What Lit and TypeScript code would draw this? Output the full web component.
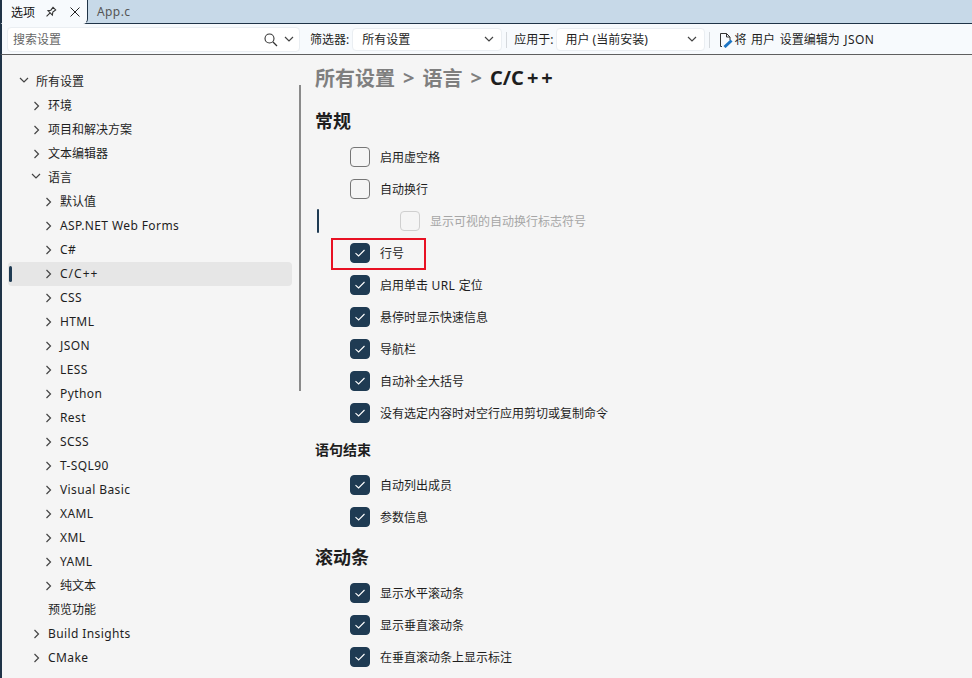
import { LitElement, html, css, svg } from 'lit';
import { customElement } from 'lit/decorators.js';

interface TreeItem {
  label: string;
  level: number;
  open?: boolean;
  leaf?: boolean;
  selected?: boolean;
}

const TREE: TreeItem[] = [
  { label: '所有设置', level: 0, open: true },
  { label: '环境', level: 1 },
  { label: '项目和解决方案', level: 1 },
  { label: '文本编辑器', level: 1 },
  { label: '语言', level: 1, open: true },
  { label: '默认值', level: 2 },
  { label: 'ASP.NET Web Forms', level: 2 },
  { label: 'C#', level: 2 },
  { label: 'C/C++', level: 2, selected: true },
  { label: 'CSS', level: 2 },
  { label: 'HTML', level: 2 },
  { label: 'JSON', level: 2 },
  { label: 'LESS', level: 2 },
  { label: 'Python', level: 2 },
  { label: 'Rest', level: 2 },
  { label: 'SCSS', level: 2 },
  { label: 'T-SQL90', level: 2 },
  { label: 'Visual Basic', level: 2 },
  { label: 'XAML', level: 2 },
  { label: 'XML', level: 2 },
  { label: 'YAML', level: 2 },
  { label: '纯文本', level: 2 },
  { label: '预览功能', level: 1, leaf: true },
  { label: 'Build Insights', level: 1 },
  { label: 'CMake', level: 1 },
];

const chevronDown = svg`<path d="M1 1 L5 5 L9 1" fill="none" stroke="currentColor" stroke-width="1.2"/>`;
const chevronRight = svg`<path d="M3.5 1 L7.5 5 L3.5 9" fill="none" stroke="currentColor" stroke-width="1.2"/>`;

// the reference font runs wider than Noto Sans on latin text, so space those runs out a bit
const spaced = (text: string) =>
  text.split(/([\x20-\x7e]*[A-Za-z#][\x20-\x7e]*)/).map((part, i) => (i % 2 ? html`<span class="latin">${part}</span>` : part));

@customElement('app-root')
export class AppRoot extends LitElement {
  static styles = css`
    :host {
      display: block;
      width: 972px;
      height: 678px;
      overflow: hidden;
      font-family: 'Noto Sans', 'Noto Sans CJK SC', sans-serif;
      font-size: 12px;
      color: #1e1e1e;
      background: #f5f5f5;
    }

    .latin {
      letter-spacing: 0.4px;
    }

    .tabstrip {
      display: flex;
      height: 23px;
      background: #c7d9e8;
      border-bottom: 1px solid #1f3347;
    }

    .tab {
      display: flex;
      align-items: center;
      box-sizing: border-box;
      width: 88px;
      height: 24px;
      padding-left: 9px;
      background: #f7fafd;
      border-left: 2px solid #1f3347;
      border-right: 1px solid #1f3347;
      border-bottom-right-radius: 5px;
      position: relative;
      z-index: 1;
      border-bottom: 1px solid #f7fafd;
    }

    .tab-title {
      width: 35px;
      color: #111;
      font-size: 12px;
    }

    .tab-pin {
      width: 11px;
      height: 11px;
      margin-right: 13px;
    }

    .tab-close {
      width: 10px;
      height: 10px;
    }

    .tab-other {
      padding: 3px 0 0 9px;
      color: #555;
      font-size: 12px;
    }

    .toolbar {
      display: flex;
      align-items: center;
      box-sizing: border-box;
      height: 31px;
      padding: 1px 0 0 5px;
      background: #f7fafd;
      border-left: 2px solid #1f3347;
      border-bottom: 1px solid #5f5f5f;
    }

    .box {
      display: flex;
      align-items: center;
      box-sizing: border-box;
      background: #fff;
      border: 1px solid #eaeef2;
      border-radius: 4px;
    }

    .search {
      width: 293px;
      height: 25px;
      padding: 0 5px 0 5px;
      color: #666;
      font-size: 12px;
    }

    .search span,
    .select span {
      flex: 1;
      margin-top: -2px;
    }

    .search .glass {
      width: 14px;
      height: 14px;
      margin-right: 6px;
      margin-left: 2px;
      color: #333;
    }

    .chev {
      width: 10px;
      height: 10px;
      flex: none;
      color: #444;
    }

    .search .chev {
      height: 7px;
    }

    .field-label {
      margin-left: 10px;
      margin-right: 3px;
      margin-top: -2px;
      white-space: nowrap;
    }

    .select {
      height: 23px;
      padding: 0 7px 0 9px;
    }

    .select.filter {
      width: 150px;
    }

    .select.scope {
      width: 149px;
      padding-left: 8px;
    }

    .select .chev {
      height: 7px;
    }

    .sep {
      width: 1px;
      height: 16px;
      margin-left: 4px;
      margin-right: -3px;
      background: #d4d8dc;
    }

    .edit-json {
      display: flex;
      align-items: center;
      margin-left: 12px;
      white-space: nowrap;
      word-spacing: 1.5px;
    }

    .edit-json svg {
      width: 14px;
      height: 16px;
      margin-right: 1px;
    }

    .edit-json span {
      margin-top: -2px;
    }

    .edit-json span span {
      margin-top: 0;
    }

    .body {
      display: flex;
      height: 624px;
      border-left: 2px solid #1f3347;
    }

    .tree {
      box-sizing: border-box;
      width: 297px;
      flex: none;
      padding: 15px 7px 0 6px;
    }

    .tree-row {
      display: flex;
      align-items: center;
      height: 24px;
      position: relative;
      border-radius: 4px;
      white-space: nowrap;
    }

    .tree-row .label {
      margin-top: -2px;
    }

    .tree-row.selected {
      background: #e6e6e6;
    }

    .tree-row.selected .latin {
      letter-spacing: 1px;
    }

    .tree-row.selected::before {
      content: '';
      position: absolute;
      left: 1px;
      top: 4px;
      width: 3px;
      height: 16px;
      border-radius: 2px;
      background: #1f3b53;
    }

    .tree-row svg {
      width: 10px;
      height: 10px;
      margin-right: 7px;
      color: #444;
      flex: none;
    }

    .tree-row .no-arrow {
      width: 17px;
      flex: none;
    }

    .splitter {
      width: 2px;
      height: 306px;
      margin-top: 30px;
      flex: none;
      background: #8a8a8a;
    }

    .content {
      flex: 1;
      padding-left: 14px;
      min-width: 0;
    }

    .crumbs {
      display: flex;
      align-items: center;
      gap: 8px;
      height: 24px;
      margin-top: 10px;
      font-size: 20px;
      font-weight: 700;
      color: #7f7f7f;
      white-space: nowrap;
    }

    .crumbs .current {
      color: #1e1e1e;
    }

    .crumbs .plus {
      margin-left: 3px;
      letter-spacing: 3px;
    }

    h2 {
      margin: 0;
      font-size: 18px;
      font-weight: 700;
      line-height: 24px;
    }

    h3 {
      margin: 0;
      font-size: 14px;
      font-weight: 700;
      line-height: 20px;
    }

    .h-general {
      margin-top: 20px;
      margin-bottom: 8px;
    }

    .h-end {
      margin-top: 11px;
      margin-bottom: 9px;
    }

    .h-scroll {
      margin-top: 12px;
      margin-bottom: 8px;
    }

    .opt {
      display: flex;
      align-items: center;
      height: 32px;
      padding-left: 35px;
      position: relative;
    }

    .opt.sub {
      padding-left: 85px;
      color: #a6a6a6;
    }

    .opt.sub::before {
      content: '';
      position: absolute;
      left: 2px;
      top: 4px;
      width: 2px;
      height: 24px;
      border-radius: 1px;
      background: #1f3b53;
    }

    .opt.mark::after {
      content: '';
      position: absolute;
      left: 16px;
      top: 1px;
      width: 95px;
      height: 32px;
      box-sizing: border-box;
      border: 2px solid #e81123;
    }

    .check {
      display: flex;
      align-items: center;
      justify-content: center;
      box-sizing: border-box;
      width: 20px;
      height: 20px;
      margin-right: 10px;
      border: 1px solid #767676;
      border-radius: 4px;
      background: #f5f5f5;
    }

    .sub .check {
      border-color: #cfcfcf;
    }

    .check.on {
      background: #1f3b53;
      border-color: #1f3b53;
    }

    .check svg {
      width: 12px;
      height: 10px;
    }
  `;

  private renderTree() {
    return TREE.map(
      (item) => html`
        <div class="tree-row ${item.selected ? 'selected' : ''}" style="padding-left:${11 + item.level * 12}px">
          ${item.leaf
            ? html`<span class="no-arrow"></span>`
            : html`<svg viewBox="0 0 10 10">${item.open ? chevronDown : chevronRight}</svg>`}
          <span class="label">${spaced(item.label)}</span>
        </div>
      `
    );
  }

  private renderOption(label: string, on = true, cls = '') {
    return html`
      <div class="opt ${cls}">
        <span class="check ${on ? 'on' : ''}">
          ${on
            ? html`<svg viewBox="0 0 12 10"><path d="M1.5 5.2 L4.6 8 L10.5 2" fill="none" stroke="#fff" stroke-width="1.1"/></svg>`
            : ''}
        </span>
        <span>${spaced(label)}</span>
      </div>
    `;
  }

  render() {
    return html`
      <div class="tabstrip">
        <div class="tab">
          <span class="tab-title">选项</span>
          <svg class="tab-pin" viewBox="0 0 10 10">
            <path d="M0.5 9.5 L3.5 6.5 M1.8 4.2 L5.8 8.2 L6.2 5.6 L8.8 3.6 L6.4 1.2 L4.4 3.8 Z" fill="none" stroke="#333" stroke-width="1"/>
          </svg>
          <svg class="tab-close" viewBox="0 0 10 10">
            <path d="M0.5 0.5 L9.5 9.5 M9.5 0.5 L0.5 9.5" fill="none" stroke="#222" stroke-width="1"/>
          </svg>
        </div>
        <div class="tab-other">${spaced('App.c')}</div>
      </div>

      <div class="toolbar">
        <div class="box search">
          <span>搜索设置</span>
          <svg class="glass" viewBox="0 0 14 14">
            <circle cx="5.5" cy="5.5" r="4.5" fill="none" stroke="currentColor" stroke-width="1.1"/>
            <path d="M9 9 L13 13" stroke="currentColor" stroke-width="1.2"/>
          </svg>
          <svg class="chev" viewBox="0 0 10 7"><path d="M1 1 L5 5 L9 1" fill="none" stroke="currentColor" stroke-width="1.2"/></svg>
        </div>
        <span class="field-label">筛选器:</span>
        <div class="box select filter">
          <span>所有设置</span>
          <svg class="chev" viewBox="0 0 10 7"><path d="M1 1 L5 5 L9 1" fill="none" stroke="currentColor" stroke-width="1.2"/></svg>
        </div>
        <div class="sep"></div>
        <span class="field-label">应用于:</span>
        <div class="box select scope">
          <span>用户 (当前安装)</span>
          <svg class="chev" viewBox="0 0 10 7"><path d="M1 1 L5 5 L9 1" fill="none" stroke="currentColor" stroke-width="1.2"/></svg>
        </div>
        <div class="sep"></div>
        <div class="edit-json">
          <svg viewBox="0 0 14 16">
            <path d="M3 14.5 H1.5 V1.5 H7.5 L11 5 V8 M7.5 1.5 V5 H11" fill="none" stroke="#333" stroke-width="1"/>
            <path d="M5.5 15 L12.5 8.5" stroke="#1b74c4" stroke-width="3"/>
          </svg>
          <span>将 用户 设置编辑为 <span class="latin">JSON</span></span>
        </div>
      </div>

      <div class="body">
        <div class="tree">${this.renderTree()}</div>
        <div class="splitter"></div>
        <div class="content">
          <div class="crumbs">
            <span>所有设置</span><span>&gt;</span><span>语言</span><span>&gt;</span>
            <span class="current">C/C<span class="plus">++</span></span>
          </div>
          <h2 class="h-general">常规</h2>
          ${this.renderOption('启用虚空格', false)}
          ${this.renderOption('自动换行', false)}
          ${this.renderOption('显示可视的自动换行标志符号', false, 'sub')}
          ${this.renderOption('行号', true, 'mark')}
          ${this.renderOption('启用单击 URL 定位')}
          ${this.renderOption('悬停时显示快速信息')}
          ${this.renderOption('导航栏')}
          ${this.renderOption('自动补全大括号')}
          ${this.renderOption('没有选定内容时对空行应用剪切或复制命令')}
          <h3 class="h-end">语句结束</h3>
          ${this.renderOption('自动列出成员')}
          ${this.renderOption('参数信息')}
          <h2 class="h-scroll">滚动条</h2>
          ${this.renderOption('显示水平滚动条')}
          ${this.renderOption('显示垂直滚动条')}
          ${this.renderOption('在垂直滚动条上显示标注')}
        </div>
      </div>
    `;
  }
}
